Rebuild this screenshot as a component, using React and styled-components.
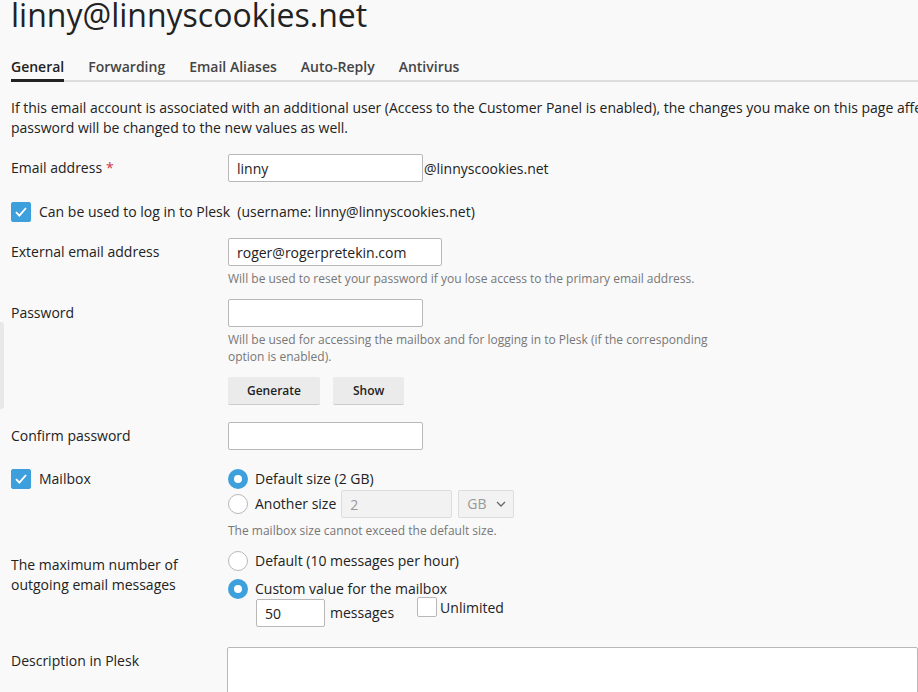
import React from 'react';
import styled, { createGlobalStyle } from 'styled-components';

const GlobalStyle = createGlobalStyle`
  html, body {
    margin: 0;
    padding: 0;
    background: #f9f9f9;
    overflow: hidden;
  }
  body {
    font-family: "Open Sans", "Noto Sans", sans-serif;
    color: #222;
    font-size: 14px;
  }
`;

const Page = styled.div`
  padding: 0 0 0 11px;
  width: 1200px;
`;

const Title = styled.h1`
  margin: 0;
  font-size: 32px;
  font-weight: 400;
  line-height: 34px;
  color: #222;
  margin-top: -2px;
`;

const Tabs = styled.div`
  display: flex;
  gap: 24px;
  margin-top: 25px;
  border-bottom: 2px solid #ddd;
  width: 907px;
`;

const Tab = styled.div`
  font-size: 14px;
  font-weight: 600;
  line-height: 20px;
  padding-bottom: 2px;
  color: ${p => (p.$active ? '#222' : '#444')};
  border-bottom: 3px solid ${p => (p.$active ? '#222' : 'transparent')};
  margin-bottom: -2px;
`;

const Intro = styled.p`
  margin: 16px 0 0;
  line-height: 20px;
  white-space: nowrap;
  color: #222;
`;

const Form = styled.div`
  margin-top: 16px;
`;

const Row = styled.div`
  display: grid;
  grid-template-columns: 217px 1fr;
  align-items: start;
  margin-bottom: ${p => p.$gap}px;
`;

const Label = styled.div`
  line-height: 20px;
  padding-top: ${p => (p.$top ?? 4)}px;
  display: flex;
  align-items: center;
  gap: 8px;
  grid-column: ${p => (p.$wide ? '1 / -1' : 'auto')};
`;

const Required = styled.span`
  color: #d0334c;
  margin-left: 4px;
`;

const Field = styled.div`
  display: flex;
  flex-direction: column;
  align-items: flex-start;
`;

const Inline = styled.div`
  display: flex;
  align-items: center;
`;

const Input = styled.input`
  box-sizing: border-box;
  width: ${p => p.$w}px;
  height: 28px;
  border: 1px solid ${p => (p.disabled ? '#ddd' : '#b8b8b8')};
  border-radius: 2px;
  background: ${p => (p.disabled ? '#f2f2f2' : '#fff')};
  color: ${p => (p.disabled ? '#999' : '#222')};
  font-family: inherit;
  font-size: 14px;
  padding: 0 8px;
  outline: none;
`;

const Suffix = styled.span`
  margin-left: 1px;
`;

const Hint = styled.div`
  font-size: 12px;
  line-height: 17px;
  color: #777;
  margin-top: 4px;
  max-width: ${p => p.$max || 600}px;
`;

const ButtonRow = styled.div`
  display: flex;
  gap: 13px;
  margin-top: 12px;
`;

const Button = styled.button`
  height: 28px;
  padding: 0 ${p => p.$pad}px;
  border: none;
  border-bottom: 1px solid #ccc;
  border-radius: 2px;
  background: #ebebeb;
  font-family: inherit;
  font-size: 12px;
  font-weight: 600;
  color: #222;
`;

const Box = styled.span`
  box-sizing: border-box;
  width: 20px;
  height: 20px;
  border-radius: 2px;
  display: inline-flex;
  align-items: center;
  justify-content: center;
  flex-shrink: 0;
  background: ${p => (p.$checked ? '#3d9fdc' : '#fff')};
  border: 1px solid ${p => (p.$checked ? '#3d9fdc' : '#b8b8b8')};
`;

const Check = ({ checked }) => (
  <Box $checked={checked}>
    {checked && (
      <svg width="16" height="16" viewBox="0 0 16 16">
        <path d="M3 8.2 L6.4 11.6 L13 4" fill="none" stroke="#fff" strokeWidth="1.9" />
      </svg>
    )}
  </Box>
);

const Radio = styled.span`
  box-sizing: border-box;
  width: 20px;
  height: 20px;
  border-radius: 50%;
  flex-shrink: 0;
  background: #fff;
  border: ${p => (p.$checked ? '6px solid #3d9fdc' : '1px solid #b8b8b8')};
`;

const Option = styled.div`
  display: flex;
  align-items: center;
  gap: 7px;
  line-height: 20px;
  margin-top: ${p => p.$mt || 0}px;
`;

const Select = styled.div`
  box-sizing: border-box;
  width: 56px;
  height: 28px;
  margin-left: 6px;
  border: 1px solid #ddd;
  border-radius: 2px;
  background: #f2f2f2;
  color: #999;
  display: flex;
  align-items: center;
  justify-content: space-between;
  padding: 0 7px 0 8px;
`;

const Sub = styled.div`
  display: flex;
  align-items: flex-start;
  margin-left: 28px;
  margin-top: 0;
`;

const Unlimited = styled.div`
  display: flex;
  align-items: center;
  margin-left: 23px;
  margin-top: -2px;
  gap: 3px;
`;

const Words = styled.span`
  margin-left: 5px;
  line-height: 28px;
`;

const TextArea = styled.textarea`
  box-sizing: border-box;
  width: 691px;
  height: 80px;
  margin-left: -1px;
  border: 1px solid #b8b8b8;
  border-radius: 2px;
  background: #fff;
  resize: none;
`;

const SideHandle = styled.div`
  position: fixed;
  left: 0;
  top: 322px;
  width: 4px;
  height: 87px;
  background: #e8e8e8;
  border-radius: 0 3px 3px 0;
`;

export default function App() {
  return (
    <>
      <GlobalStyle />
      <SideHandle />
      <Page>
        <Title>linny@linnyscookies.net</Title>
        <Tabs>
          <Tab $active>General</Tab>
          <Tab>Forwarding</Tab>
          <Tab>Email Aliases</Tab>
          <Tab>Auto-Reply</Tab>
          <Tab>Antivirus</Tab>
        </Tabs>
        <Intro>
          If this email account is associated with an additional user (Access to the Customer Panel is enabled), the changes you make on this page affect the user as well: the user's email address and
          <br />
          password will be changed to the new values as well.
        </Intro>
        <Form>
          <Row $gap={20}>
            <Label>
              <span>Email address<Required>*</Required></span>
            </Label>
            <Inline>
              <Input $w={195} defaultValue="linny" />
              <Suffix>@linnyscookies.net</Suffix>
            </Inline>
          </Row>
          <Row $gap={16}>
            <Label $top={0} $wide>
              <Check checked />
              <span>Can be used to log in to Plesk&nbsp; (username: linny@linnyscookies.net)</span>
            </Label>
          </Row>
          <Row $gap={12}>
            <Label>External email address</Label>
            <Field>
              <Input $w={214} defaultValue="roger@rogerpretekin.com" />
              <Hint>Will be used to reset your password if you lose access to the primary email address.</Hint>
            </Field>
          </Row>
          <Row $gap={17}>
            <Label>Password</Label>
            <Field>
              <Input $w={195} type="password" />
              <Hint $max={490}>Will be used for accessing the mailbox and for logging in to Plesk (if the corresponding option is enabled).</Hint>
              <ButtonRow>
                <Button $pad={19}>Generate</Button>
                <Button $pad={20}>Show</Button>
              </ButtonRow>
            </Field>
          </Row>
          <Row $gap={19}>
            <Label>Confirm password</Label>
            <Field>
              <Input $w={195} type="password" />
            </Field>
          </Row>
          <Row $gap={12}>
            <Label $top={0}>
              <Check checked />
              <span>Mailbox</span>
            </Label>
            <Field>
              <Option>
                <Radio $checked />
                <span>Default size (2 GB)</span>
              </Option>
              <Option $mt={1}>
                <Radio />
                <span>Another size</span>
                <Inline>
                  <Input $w={111} disabled defaultValue="2" style={{ marginLeft: -2 }} />
                  <Select>
                    <span>GB</span>
                    <svg width="10" height="6" viewBox="0 0 10 6">
                      <path d="M1 1 L5 5 L9 1" fill="none" stroke="#666" strokeWidth="1.3" />
                    </svg>
                  </Select>
                </Inline>
              </Option>
              <Hint>The mailbox size cannot exceed the default size.</Hint>
            </Field>
          </Row>
          <Row $gap={20}>
            <Label $top={4}>The maximum number of<br />outgoing email messages</Label>
            <Field>
              <Option>
                <Radio />
                <span>Default (10 messages per hour)</span>
              </Option>
              <Option $mt={8}>
                <Radio $checked />
                <span>Custom value for the mailbox</span>
              </Option>
              <Sub>
                <Input $w={69} defaultValue="50" />
                <Words>messages</Words>
                <Unlimited>
                  <Check />
                  <span>Unlimited</span>
                </Unlimited>
              </Sub>
            </Field>
          </Row>
          <Row $gap={0}>
            <Label $top={4}>Description in Plesk</Label>
            <Field>
              <TextArea />
            </Field>
          </Row>
        </Form>
      </Page>
    </>
  );
}
